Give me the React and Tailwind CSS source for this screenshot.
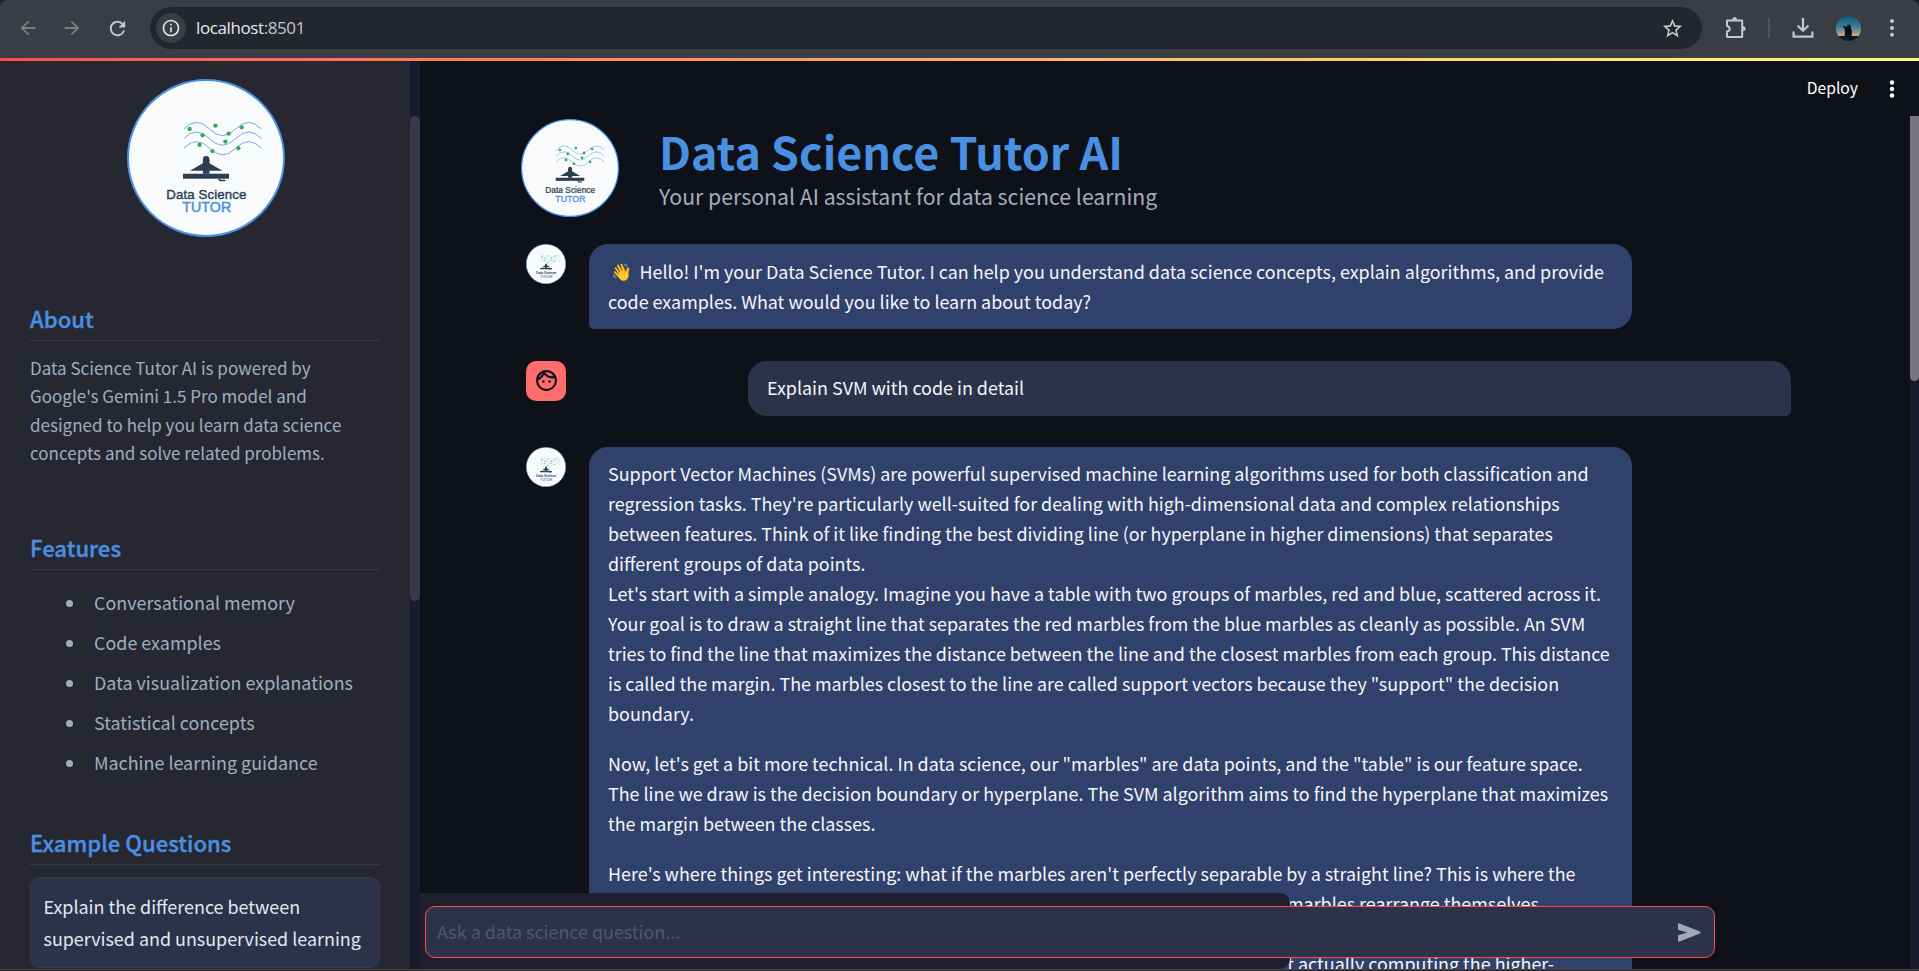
import { MdArrowBack, MdArrowForward, MdRefresh, MdStarBorder, MdOutlineFace, MdInfoOutline } from "react-icons/md";

function Logo({ className }) {
  return (
    <svg viewBox="378 236 477 477" className={className}>
      <circle cx="616.5" cy="474.5" r="235.5" fill="#f8fafc" stroke="#4a90e2" strokeWidth="6" />
      <g fill="none" stroke="#4a90e2" strokeWidth="3" opacity="0.75">
        <path d="M549 387Q588 347 627 387T706 387T784 387" />
        <path d="M549 416Q588 376 627 416T706 416T784 416" />
        <path d="M549 445Q588 405 627 445T706 445T784 445" />
      </g>
      <g fill="#34a853">
        <circle cx="567" cy="387" r="6.5" />
        <circle cx="645" cy="377" r="6.5" />
        <circle cx="724" cy="382" r="6.5" />
        <circle cx="606" cy="406" r="6.5" />
        <circle cx="685" cy="401" r="6.5" />
        <circle cx="675" cy="425" r="6.5" />
        <circle cx="597" cy="435" r="6.5" />
        <circle cx="636" cy="454" r="6.5" />
        <circle cx="714" cy="445" r="6.5" />
      </g>
      <g fill="#2c3e50">
        <circle cx="617" cy="478" r="9.5" />
        <path d="M607 478h20v12l39 23h-39v9h-20v-9h-39l39-23z" />
        <rect x="547" y="522" width="139" height="15" />
        <path d="M654 537h6v3h15v5h-17l-4-4z" />
      </g>
      <g fontFamily="Liberation Sans, sans-serif" textAnchor="middle">
        <text x="617.5" y="597" fontSize="40" fill="#2c3e50" stroke="#2c3e50" strokeWidth="1.2" textLength="242">Data Science</text>
        <text x="618.5" y="638" fontSize="43" fill="#4a90e2" stroke="#4a90e2" strokeWidth="1.4" textLength="148">TUTOR</text>
      </g>
    </svg>
  );
}

function Toolbar() {
  return (
    <div className="h-[58px] shrink-0 bg-[#1f2127]">
      <div className="flex h-full items-center rounded-t-[8px] bg-[#3b3d45] pb-[2px]">
        <MdArrowBack className="ml-[17px] size-[22px] text-[#7c7d83]" />
        <MdArrowForward className="ml-[22px] size-[22px] text-[#7c7d83]" />
        <MdRefresh className="ml-[23px] size-[23px] text-[#c5c6cf]" />
        <div className="ml-[21px] flex h-[42px] w-[1552px] items-center rounded-full bg-[#24262d] pr-[18px] pl-[6px]">
          <div className="flex size-[30px] items-center justify-center rounded-full bg-[#3b3d45]">
            <MdInfoOutline className="size-[20px] text-[#e3e3e3]" />
          </div>
          <div className="ml-[10px] font-['Open_Sans',sans-serif] text-[17px] tracking-[-0.4px] text-[#e8e8ea]">
            localhost<span className="text-[#c4c5ca]">:8501</span>
          </div>
          <MdStarBorder className="ml-auto size-[23px] text-[#d0d0d4]" />
        </div>
        <svg viewBox="0 0 24 24" className="ml-[22px] size-[24px]" fill="none" stroke="#c5c6cf" strokeWidth="2" strokeLinejoin="round">
          <path d="M3 4.5h15.2v16.4H3v-5.4c3.6-.6 3.6-5 0-5.6z" />
          <path d="M8.6 3.6a2 2 0 0 1 4 0zM19.2 10.7a2 2 0 0 1 0 4z" fill="#c5c6cf" strokeWidth="1" />
        </svg>
        <div className="ml-[20px] h-[20px] w-[2px] bg-[#53555c]" />
        <svg viewBox="0 0 22 22" className="ml-[22px] size-[22px]" fill="none" stroke="#c5c6cf" strokeWidth="2.2">
          <path d="M11 1v12.500M5.500 8.500l5.500 5.300 5.500-5.300M1.600 14.500v5.200h18.800v-5.200" />
        </svg>
        <svg viewBox="0 0 25 25" className="ml-[22px] size-[25px]">
          <defs>
            <linearGradient id="dusk" x1="0" y1="0" x2="0" y2="1">
              <stop offset="0" stopColor="#0d5a7c" />
              <stop offset="0.45" stopColor="#3d8298" />
              <stop offset="0.8" stopColor="#d8a983" />
              <stop offset="0.82" stopColor="#0c1a20" />
            </linearGradient>
          </defs>
          <circle cx="12.5" cy="12.5" r="12.5" fill="url(#dusk)" />
          <path d="M6.500 9.500l4.500 1.500.500-2.300h3l.500 3 1 4-.500 5h-7l.500-5.500-.500-2.700z" fill="#081015" />
        </svg>
        <svg viewBox="0 0 6 20" className="ml-[28px] h-[20px] w-[6px]" fill="#c5c6cf">
          <circle cx="3" cy="3" r="2" />
          <circle cx="3" cy="10" r="2" />
          <circle cx="3" cy="16.700" r="2" />
        </svg>
      </div>
    </div>
  );
}

function Heading({ children, className }) {
  return (
    <h2 className={"h-[37px] shrink-0 border-b border-[#3a394b] text-[22.1px] leading-[28px] font-medium text-[#4a90e2] [-webkit-text-stroke:0.35px_#4a90e2] " + className}>
      {children}
    </h2>
  );
}

const FEATURES = [
  "Conversational memory",
  "Code examples",
  "Data visualization explanations",
  "Statistical concepts",
  "Machine learning guidance",
];

function Lines({ lines, className = "" }) {
  return (
    <div className={className}>
      {lines.map((line) => (
        <div key={line} className="whitespace-nowrap">{line}</div>
      ))}
    </div>
  );
}

function Sidebar() {
  return (
    <>
      <aside className="flex h-full w-[410px] shrink-0 flex-col overflow-hidden bg-[#262730] px-[30px] text-[#a0aec0]">
        <Logo className="mt-[18px] ml-[96.5px] size-[158px] shrink-0" />
        <Heading className="mt-[67px]">About</Heading>
        <Lines
          className="mt-[12.5px] text-[17.03px] leading-[28.5px]"
          lines={[
            "Data Science Tutor AI is powered by",
            "Google's Gemini 1.5 Pro model and",
            "designed to help you learn data science",
            "concepts and solve related problems.",
          ]}
        />
        <Heading className="mt-[65.5px]">Features</Heading>
        <ul className="mt-[12px]">
          {FEATURES.map((feature) => (
            <li key={feature} className="flex h-[40px] items-center pl-[36px] text-[17.92px]">
              <span className="mt-[2px] size-[7px] rounded-full bg-[#a0aec0]" />
              <span className="ml-[21px]">{feature}</span>
            </li>
          ))}
        </ul>
        <Heading className="mt-[46px]">Example Questions</Heading>
        <button className="mt-[12px] h-[91px] shrink-0 rounded-[10px] border border-[#3a394b] bg-[#2b324a] pb-[1px] pl-[12.5px] text-left text-[17.92px] leading-[32px] text-[#e2e8f0]">
          <Lines lines={["Explain the difference between", "supervised and unsupervised learning"]} />
        </button>
      </aside>
      <div className="h-full w-[10px] shrink-0 bg-[#1a1a2e] pt-[55px]">
        <div className="h-[485px] rounded-full bg-[#3a394b]" />
      </div>
    </>
  );
}

const BUBBLE = "pt-[11px] pl-[19px] text-[17.92px] leading-[30px] text-[#f4f6fa] ";

function Chat() {
  return (
    <div className="flex min-h-0 flex-1 flex-col overflow-hidden pl-[101px]">
      <div className="flex h-[125px] shrink-0">
        <Logo className="size-[98px]" />
        <div className="ml-[40px] pt-[2px]">
          <h1 className="text-[44.8px] leading-[59px] font-bold whitespace-nowrap text-[#4a90e2]">Data Science Tutor AI</h1>
          <p className="mt-[-2px] text-[21.25px] leading-[35px] text-[#a0aec0]">Your personal AI assistant for data science learning</p>
        </div>
      </div>
      <div className="flex shrink-0">
        <Logo className="ml-[5px] size-[40px]" />
        <div className="ml-[23px] h-[85px] w-[1043px] rounded-[19px] rounded-bl-[5px] bg-[#30416b] pt-[12px] pl-[19px] text-[17.92px] leading-[30px] text-[#f4f6fa]">
          <div className="flex whitespace-nowrap">
            <span className="w-[31.5px] pl-[3px] text-[17px]">👋</span>
            <span>Hello! I'm your Data Science Tutor. I can help you understand data science concepts, explain algorithms, and provide</span>
          </div>
          <Lines lines={["code examples. What would you like to learn about today?"]} />
        </div>
      </div>
      <div className="mt-[32px] flex shrink-0">
        <div className="ml-[5px] flex size-[40px] items-center justify-center rounded-[10px] bg-[#ff6c6c]">
          <MdOutlineFace className="mb-px ml-px size-[25px] text-[#0e1117]" />
        </div>
        <div className={"ml-[182px] h-[55px] w-[1043px] rounded-[19px] rounded-br-[5px] bg-[#2b324a] " + BUBBLE}>
          <Lines lines={["Explain SVM with code in detail"]} />
        </div>
      </div>
      <div className="mt-[31px] flex shrink-0">
        <Logo className="ml-[5px] size-[40px]" />
        <div className={"ml-[23px] w-[1043px] rounded-t-[19px] bg-[#30416b] " + BUBBLE}>
          <Lines
            lines={[
              "Support Vector Machines (SVMs) are powerful supervised machine learning algorithms used for both classification and",
              "regression tasks. They're particularly well-suited for dealing with high-dimensional data and complex relationships",
              "between features. Think of it like finding the best dividing line (or hyperplane in higher dimensions) that separates",
              "different groups of data points.",
              "Let's start with a simple analogy. Imagine you have a table with two groups of marbles, red and blue, scattered across it.",
              "Your goal is to draw a straight line that separates the red marbles from the blue marbles as cleanly as possible. An SVM",
              "tries to find the line that maximizes the distance between the line and the closest marbles from each group. This distance",
              "is called the margin. The marbles closest to the line are called support vectors because they \"support\" the decision",
              "boundary.",
            ]}
          />
          <Lines
            className="mt-[20px]"
            lines={[
              "Now, let's get a bit more technical. In data science, our \"marbles\" are data points, and the \"table\" is our feature space.",
              "The line we draw is the decision boundary or hyperplane. The SVM algorithm aims to find the hyperplane that maximizes",
              "the margin between the classes.",
            ]}
          />
          <Lines
            className="mt-[20px]"
            lines={["Here's where things get interesting: what if the marbles aren't perfectly separable by a straight line? This is where the"]}
          />
          <Lines className="ml-[679px]" lines={["marbles rearrange themselves"]} />
          <div className="mt-[30px] mr-[78px] text-right">t actually computing the higher-</div>
        </div>
      </div>
    </div>
  );
}

function ChatInput() {
  return (
    <div className="absolute bottom-0 left-0 h-[76px] w-[870px] rounded-r-[10px] bg-[#1e1e2c] pt-[13px] pl-[5px]">
      <div className="flex h-[52px] w-[1290px] items-center rounded-[10px] border border-[#ff4b4b] bg-[#2b324a] pr-[13px] pl-[11px]">
        <span className="pb-[2px] text-[17.92px] text-[#525868]">Ask a data science question...</span>
        <svg viewBox="0 0 23 19" className="ml-auto h-[19px] w-[23px]" fill="#a3a8b8">
          <path d="M0 1.300Q0-.3 1.600.4L21.900 8.600Q23.300 9.500 21.900 10.400L1.600 18.600Q0 19.300 0 17.700V12.200L9.500 9.500 0 6.800z" />
        </svg>
      </div>
    </div>
  );
}

export default function App() {
  return (
    <div className="flex h-[971px] w-full flex-col overflow-hidden bg-[#0e1117] font-['Noto_Sans_CJK_SC','Noto_Sans',sans-serif]">
      <Toolbar />
      <div className="h-[3px] shrink-0 bg-linear-to-r from-[#ff4b4b] to-[#fffd80]" />
      <div className="flex min-h-0 flex-1">
        <Sidebar />
        <div className="relative flex min-w-0 flex-1 flex-col">
          <header className="flex h-[58px] shrink-0 items-center justify-end pb-[3px] text-[15.7px] text-white">
            <span className="pb-[2px]">Deploy</span>
            <svg viewBox="0 0 6 18" className="mr-[24px] ml-[31px] h-[18px] w-[6px]" fill="#ffffff">
              <circle cx="3" cy="2.5" r="2.2" />
              <circle cx="3" cy="9" r="2.2" />
              <circle cx="3" cy="15.5" r="2.2" />
            </svg>
          </header>
          <Chat />
          <ChatInput />
          <div className="absolute top-[55px] right-0 bottom-0 w-[9px] bg-[#1a1a2e]">
            <div className="h-[265px] rounded-b-full bg-[#76757f]" />
          </div>
        </div>
      </div>
      <div className="h-[2px] shrink-0 border-t border-[#454545] bg-[#282828]" />
    </div>
  );
}
